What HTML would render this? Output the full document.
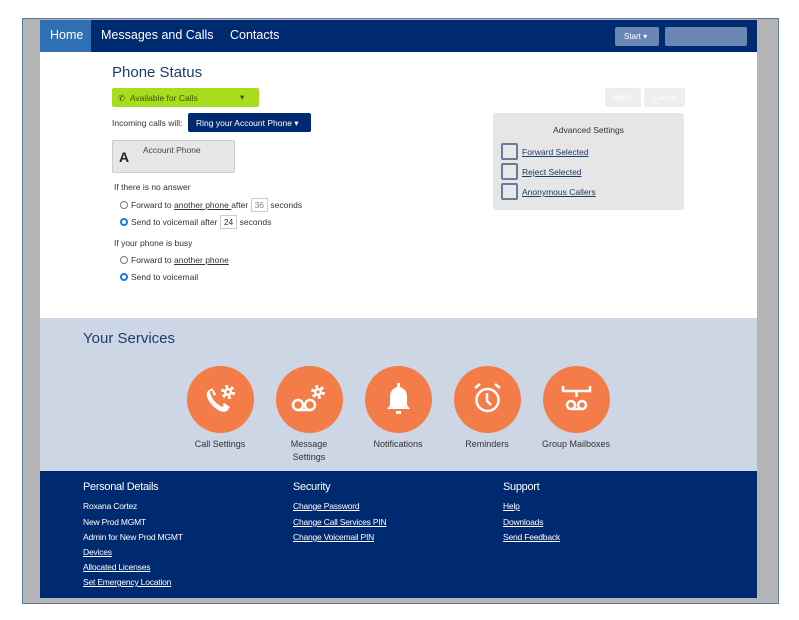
<!DOCTYPE html>
<html><head><meta charset="utf-8"><style>
*{box-sizing:border-box;margin:0;padding:0}
body{width:799px;height:620px;background:#fff;font-family:"Liberation Sans",sans-serif;position:relative;overflow:hidden}
.frame{position:absolute;left:22px;top:18px;width:757px;height:586px;border:1.5px solid #5b7aa3;background:#b5b5b5}
.abs{position:absolute}
.nav{left:40px;top:20px;width:717px;height:32px;background:#002a70}
.nav span{position:absolute;top:8px;color:#fff;font-size:12.5px}
.main{left:40px;top:52px;width:717px;height:266px;background:#fff}
.svc{left:40px;top:318px;width:717px;height:153px;background:#cdd6e4}
.foot{left:40px;top:471px;width:717px;height:127px;background:#002a70;color:#fff}
.t9{font-size:9px;color:#333}
.radio{display:inline-block;width:8px;height:8px;border-radius:50%;border:1px solid #777;vertical-align:-1px;margin-right:3px}
.radio.on{border:2.5px solid #1e73e8;background:#fff}
.box{display:inline-block;border:1px solid #ccc;padding:1px 3px;color:#888}
.circ{position:absolute;top:366px;width:67px;height:67px;border-radius:50%;background:#f47c48}
.lbl{position:absolute;top:438px;font-size:9px;color:#333;text-align:center;width:90px;line-height:13px}
.foot h4{position:absolute;font-weight:normal;font-size:11px;top:10px;letter-spacing:-0.3px}
.foot div{position:absolute;font-size:8.5px;letter-spacing:-0.2px}
.u{text-decoration:underline}
.cb{display:inline-block;width:17px;height:17px;border:2px solid #6a7a99;border-radius:2px;vertical-align:-5px;margin-right:4px;background:#e8e8e8}
</style></head><body>
<div class="frame"></div>
<div class="abs nav">
 <div class="abs" style="left:0;top:0;width:51px;height:32px;background:#3070b5"></div>
 <span style="left:10px">Home</span><span style="left:61px">Messages and Calls</span><span style="left:190px">Contacts</span>
 <div class="abs" style="left:575px;top:7px;width:44px;height:19px;background:#6a86b3;border-radius:2px;color:#fff;font-size:8px;padding:5px 0 0 9px">Start ▾</div>
 <div class="abs" style="left:625px;top:7px;width:82px;height:19px;background:#6a86b3;border-radius:2px"></div>
</div>
<div class="abs main"></div>
<div class="abs" style="left:112px;top:64px;font-size:15px;color:#1d3c6e">Phone Status</div>
<div class="abs" style="left:112px;top:88px;width:147px;height:19px;background:#a7dd1c;border-radius:2px;font-size:8.5px;color:#35560a;padding:5px 0 0 6px">✆ &nbsp;Available for Calls<span style="position:absolute;left:128px;top:4px">▾</span></div>
<div class="abs t9" style="left:112px;top:118px;font-size:8.5px">Incoming calls will:</div>
<div class="abs" style="left:188px;top:113px;width:123px;height:19px;background:#002a70;border-radius:2px;color:#fff;font-size:8.5px;padding:5px 0 0 8px">Ring your Account Phone ▾</div>
<div class="abs" style="left:112px;top:140px;width:123px;height:33px;background:#e6e6e6;border:1px solid #ccc;border-radius:2px">
 <span style="position:absolute;left:6px;top:8px;font-size:14px;font-weight:bold;color:#222">A</span>
 <span style="position:absolute;left:30px;top:4px;font-size:8.5px;color:#444">Account Phone</span></div>
<div class="abs t9" style="left:114px;top:182px;font-size:8.5px">If there is no answer</div>
<div class="abs t9" style="left:120px;top:198px;font-size:8.5px"><span class="radio"></span>Forward to <span class="u">another phone </span>after <span class="box">36</span> seconds</div>
<div class="abs t9" style="left:120px;top:215px;font-size:8.5px"><span class="radio on"></span>Send to voicemail after <span class="box" style="color:#333">24</span> seconds</div>
<div class="abs t9" style="left:114px;top:238px;font-size:8.5px">If your phone is busy</div>
<div class="abs t9" style="left:120px;top:255px;font-size:8.5px"><span class="radio"></span>Forward to <span class="u">another phone</span></div>
<div class="abs t9" style="left:120px;top:272px;font-size:8.5px"><span class="radio on"></span>Send to voicemail</div>
<div class="abs" style="left:605px;top:88px;width:36px;height:19px;background:#eee;border-radius:2px;color:#fff;font-size:8px;text-align:center;padding-top:5px">Apply</div>
<div class="abs" style="left:644px;top:88px;width:41px;height:19px;background:#eee;border-radius:2px;color:#fff;font-size:8px;text-align:center;padding-top:5px">Cancel</div>
<div class="abs" style="left:493px;top:113px;width:191px;height:97px;background:#e6e6e6;border-radius:3px">
 <div class="abs t9" style="left:0;width:191px;text-align:center;top:12px;font-size:8.5px">Advanced Settings</div>
 <div class="abs t9" style="left:8px;top:30px;font-size:8.5px;color:#1d3c6e"><span class="cb"></span><span class="u">Forward Selected</span></div>
 <div class="abs t9" style="left:8px;top:50px;font-size:8.5px;color:#1d3c6e"><span class="cb"></span><span class="u">Reject Selected</span></div>
 <div class="abs t9" style="left:8px;top:70px;font-size:8.5px;color:#1d3c6e"><span class="cb"></span><span class="u">Anonymous Callers</span></div>
</div>
<div class="abs svc"></div>
<div class="abs" style="left:83px;top:330px;font-size:15px;color:#1d3c6e">Your Services</div>
<div class="circ" style="left:187px"><svg width="67" height="67" viewBox="0 0 67 67"><path d="M21 25l4-3 4 6-3 3q3 6 8 9l3-3 6 4-3 4q-4 2-9-1-8-5-11-13-1-4 1-6z" fill="#fff"/><path d="M24 25q2 10 12 15" stroke="#f47c48" stroke-width="2.5" fill="none"/><circle cx="41" cy="26" r="4.5" fill="none" stroke="#fff" stroke-width="5" stroke-dasharray="2.4 2.3"/><circle cx="41" cy="26" r="4" fill="#fff"/><circle cx="41" cy="26" r="1.6" fill="#f47c48"/></svg></div>
<div class="circ" style="left:276px"><svg width="67" height="67" viewBox="0 0 67 67" fill="none" stroke="#fff" stroke-width="2.5"><circle cx="22" cy="39" r="5"/><circle cx="34" cy="39" r="5"/><path d="M22 44h12"/><circle cx="42" cy="26" r="4.5" stroke-width="5" stroke-dasharray="2.4 2.3"/><circle cx="42" cy="26" r="4" fill="#fff" stroke="none"/><circle cx="42" cy="26" r="1.6" fill="#f47c48" stroke="none"/></svg></div>
<div class="circ" style="left:365px"><svg width="67" height="67" viewBox="0 0 67 67"><path d="M22 43h23l-3-4v-9c0-5-4-9-8.5-9S25 25 25 30v9z" fill="#fff"/><rect x="32" y="17" width="3" height="4" fill="#fff"/><rect x="31" y="45" width="5" height="3" fill="#fff"/></svg></div>
<div class="circ" style="left:454px"><svg width="67" height="67" viewBox="0 0 67 67" fill="none" stroke="#fff" stroke-width="2.5"><circle cx="33.5" cy="34" r="11"/><path d="M33 27v8l4 4M21 22l5-4M46 22l-5-4"/></svg></div>
<div class="circ" style="left:543px"><svg width="67" height="67" viewBox="0 0 67 67" fill="none" stroke="#fff" stroke-width="2.5"><path d="M20 20v5h27v-5M33.5 25v6"/><circle cx="28" cy="39" r="4"/><circle cx="39" cy="39" r="4"/><path d="M28 43h11"/></svg></div>
<div class="lbl" style="left:175px">Call Settings</div>
<div class="lbl" style="left:264px">Message<br>Settings</div>
<div class="lbl" style="left:353px">Notifications</div>
<div class="lbl" style="left:442px">Reminders</div>
<div class="lbl" style="left:531px">Group Mailboxes</div>
<div class="abs foot">
 <h4 style="left:43px">Personal Details</h4><h4 style="left:253px">Security</h4><h4 style="left:463px">Support</h4>
 <div style="left:43px;top:30px">Roxana Cortez</div>
 <div style="left:43px;top:46px">New Prod MGMT</div>
 <div style="left:43px;top:61px">Admin for New Prod MGMT</div>
 <div class="u" style="left:43px;top:76px">Devices</div>
 <div class="u" style="left:43px;top:91px">Allocated Licenses</div>
 <div class="u" style="left:43px;top:106px">Set Emergency Location</div>
 <div class="u" style="left:253px;top:30px">Change Password</div>
 <div class="u" style="left:253px;top:46px">Change Call Services PIN</div>
 <div class="u" style="left:253px;top:61px">Change Voicemail PIN</div>
 <div class="u" style="left:463px;top:30px">Help</div>
 <div class="u" style="left:463px;top:46px">Downloads</div>
 <div class="u" style="left:463px;top:61px">Send Feedback</div>
</div>
</body></html>
